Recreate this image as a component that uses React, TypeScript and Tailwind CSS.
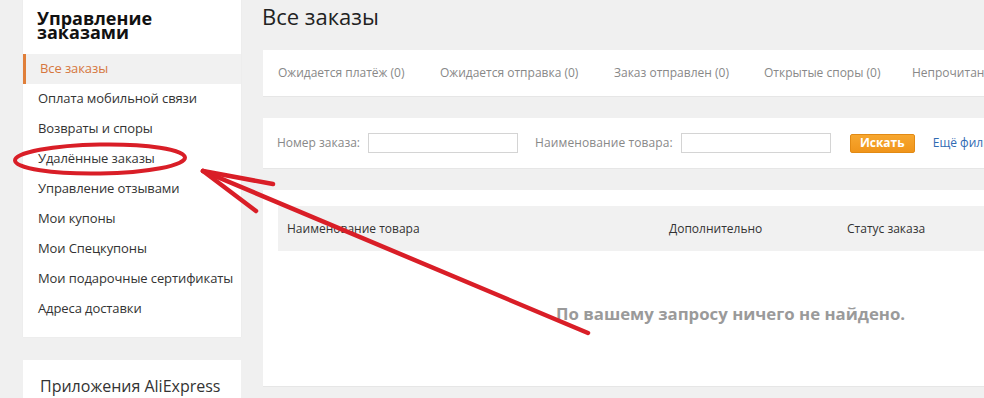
import React from "react";

const items = [
  "Все заказы",
  "Оплата мобильной связи",
  "Возвраты и споры",
  "Удалённые заказы",
  "Управление отзывами",
  "Мои купоны",
  "Мои Спецкупоны",
  "Мои подарочные сертификаты",
  "Адреса доставки",
];

const tabs = [
  "Ожидается платёж (0)",
  "Ожидается отправка (0)",
  "Заказ отправлен (0)",
  "Открытые споры (0)",
  "Непрочитанные сообщения (0)",
];

export default function App() {
  return (
    <div
      className="relative w-[984px] h-[398px] overflow-hidden bg-[#f0f0f0] flex"
      style={{ fontFamily: '"Open Sans", "Noto Sans", sans-serif' }}
    >
      {/* Sidebar */}
      <div className="ml-[23px] w-[218px] shrink-0 flex flex-col">
        <div className="bg-white h-[337px] pt-[11px] pb-[14px] shadow-[0_0_1px_rgba(0,0,0,0.08)]">
          <div className="pl-[14px] text-[18px] font-bold leading-[14px] text-[#111]">
            Управление
            <br />
            заказами
          </div>
          <div className="mt-[15px] flex flex-col">
            {items.map((t, i) => (
              <div
                key={t}
                className={
                  i === 0
                    ? "h-[30px] flex items-center bg-[#f1f1f1] border-l-[3px] border-[#e07f3a] pl-[14px] text-[13px] text-[#d6763d] tracking-[-0.1px]"
                    : "h-[30px] flex items-center pl-[15px] text-[13px] text-[#333] tracking-[-0.1px]"
                }
              >
                {t}
              </div>
            ))}
          </div>
        </div>
        <div className="mt-[23px] bg-white h-[60px] pt-[14px] pl-[17px] text-[16px] text-[#333]">
          Приложения AliExpress
        </div>
      </div>

      {/* Main */}
      <div className="ml-[22px] w-[900px] shrink-0 flex flex-col">
        <div className="h-[50px] text-[22px] leading-[32px] text-[#222] -ml-px">
          Все заказы
        </div>
        <div className="bg-white h-[47px] flex items-center pl-[15px] text-[12px] text-[#888] border-b border-[#e6e6e6]">
          {tabs.map((t, i) => (
            <span
              key={t}
              className={
                i === 0
                  ? "w-[162px] shrink-0 whitespace-nowrap"
                  : i === 1
                  ? "w-[174px] shrink-0 whitespace-nowrap"
                  : i === 2
                  ? "w-[150px] shrink-0 whitespace-nowrap"
                  : i === 3
                  ? "w-[148px] shrink-0 whitespace-nowrap"
                  : "shrink-0 whitespace-nowrap"
              }
            >
              {t}
            </span>
          ))}
        </div>
        <div className="mt-[21px] bg-white h-[51px] flex items-center pl-[14px] text-[12px] text-[#888] border-b border-[#e6e6e6]">
          <span className="whitespace-nowrap">Номер заказа:</span>
          <div className="ml-[8px] w-[150px] h-[20px] border border-[#d4d4d4] bg-white" />
          <span className="ml-[17px] whitespace-nowrap tracking-[0.1px]">Наименование товара:</span>
          <div className="ml-[8px] w-[150px] h-[20px] border border-[#d4d4d4] bg-white" />
          <div className="ml-[19px] w-[65px] h-[19px] rounded-[2px] border border-[#e28a14] bg-gradient-to-b from-[#f7a72f] to-[#f0951a] flex items-center justify-center text-[12px] font-bold text-white">
            Искать
          </div>
          <span className="ml-[18px] whitespace-nowrap text-[#2f6bb3]">Ещё фильтры</span>
        </div>
        <div className="mt-[21px] bg-white h-[197px] pt-[16px] pl-[15px] border-b border-[#e6e6e6]">
          <div className="h-[45px] bg-[#f1f1f1] flex items-center text-[12px] text-[#333]">
            <span className="ml-[9px] w-[382px] shrink-0">Наименование товара</span>
            <span className="w-[178px] shrink-0">Дополнительно</span>
            <span className="shrink-0">Статус заказа</span>
          </div>
          <div className="mt-[50px] pl-[278px] text-[16.8px] font-bold text-[#9a9a9a] whitespace-nowrap">
            По вашему запросу ничего не найдено.
          </div>
        </div>
      </div>

      {/* Red annotation */}
      <svg
        className="absolute left-0 top-0 pointer-events-none"
        width="984"
        height="398"
        viewBox="0 0 984 398"
      >
        <g
          fill="none"
          stroke="#d91e27"
          strokeWidth="4"
          strokeLinecap="round"
          strokeLinejoin="round"
        >
          <ellipse cx="100" cy="159" rx="85" ry="14.5" transform="rotate(-1 100 159)" />
          <path d="M203 171 L588 333" strokeWidth="4.5" />
          <path d="M203 171 L273 184" strokeWidth="4.5" />
          <path d="M203 171 L256 211" strokeWidth="4.5" />
        </g>
      </svg>
    </div>
  );
}
